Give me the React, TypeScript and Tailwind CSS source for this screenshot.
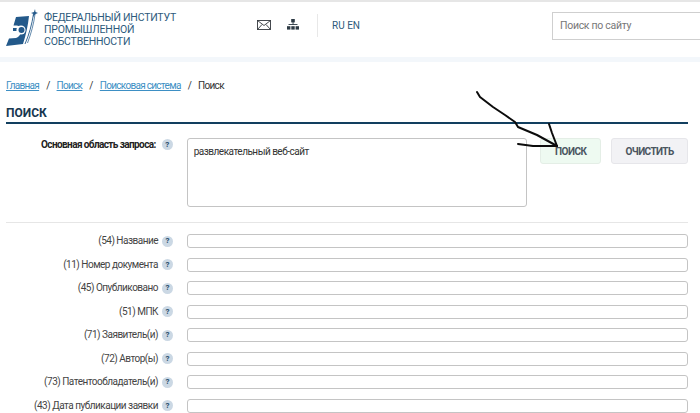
import React from "react";

const fontStack = 'Roboto, "Open Sans", sans-serif';

const rows = [
  "(54) Название",
  "(11) Номер документа",
  "(45) Опубликовано",
  "(51) МПК",
  "(71) Заявитель(и)",
  "(72) Автор(ы)",
  "(73) Патентообладатель(и)",
  "(43) Дата публикации заявки",
];

function Help() {
  return (
    <span className="flex h-[11px] w-[11px] shrink-0 items-center justify-center rounded-full bg-[#cbd8e4] text-[8px] font-bold leading-none text-[#1f4a69]">
      ?
    </span>
  );
}

function Logo() {
  return (
    <svg width="34" height="40" viewBox="0 0 34 40" className="shrink-0">
      <path d="M11 8 L24 7 C23 16 21 26 18 35 L1 37 L4 29.5 L11 29 C14 28 16 25 16.5 21 C16 17 13 16 8.5 16.5 Z" fill="#23598a" />
      <path d="M8 20.5 L12 20.5" stroke="#23598a" strokeWidth="3" />
      <circle cx="16" cy="21" r="4.6" fill="#fff" />
      <circle cx="16.5" cy="21" r="3" fill="#23598a" />
      <path d="M20 35 C24 26 27 15 28.5 5" stroke="#23598a" strokeWidth="0.9" fill="none" />
      <path d="M22.5 34 C26 25 29 14 30 5" stroke="#23598a" strokeWidth="0.7" fill="none" />
      <path d="M30 0 L30.5 3 L33 4 L30.5 5 L28 8 L28.5 5 L26 4 L29 3 Z" fill="#23598a" />
    </svg>
  );
}

function MailIcon() {
  return (
    <svg width="14" height="10" viewBox="0 0 14 10" fill="none" stroke="#33383d" strokeWidth="0.9">
      <rect x="0.5" y="0.5" width="13" height="9" />
      <path d="M0.5 0.5 L7 5.5 L13.5 0.5 M0.5 9.5 L5 4.5 M13.5 9.5 L9 4.5" />
    </svg>
  );
}

function SitemapIcon() {
  return (
    <svg width="12" height="11" viewBox="0 0 12 11" fill="#2d3a44">
      <rect x="4.2" y="0" width="3.6" height="3.4" />
      <rect x="5.6" y="3" width="0.9" height="3" />
      <rect x="1.5" y="5" width="9" height="0.9" />
      <rect x="0" y="7.2" width="3.4" height="3.4" />
      <rect x="4.3" y="7.2" width="3.4" height="3.4" />
      <rect x="8.6" y="7.2" width="3.4" height="3.4" />
    </svg>
  );
}

export default function App() {
  return (
    <div className="relative h-[413px] w-[700px] overflow-hidden bg-white" style={{ fontFamily: fontStack }}>
      <div className="h-[2px] bg-[#e6e6e6]" />
      <header className="flex h-[55px] items-start">
        <div className="ml-[5px] mt-[7px] w-[34px]">
          <Logo />
        </div>
        <div className="ml-[5px] mt-[10px] w-[170px] text-[10.5px] leading-[12px] tracking-[-0.2px] text-[#2d5a7c]">
          ФЕДЕРАЛЬНЫЙ ИНСТИТУТ
          <br />
          ПРОМЫШЛЕННОЙ
          <br />
          СОБСТВЕННОСТИ
        </div>
        <div className="ml-[43px] mt-[18px]">
          <MailIcon />
        </div>
        <div className="ml-[16px] mt-[17px]">
          <SitemapIcon />
        </div>
        <div className="ml-[18px] mt-[12px] h-[23px] w-px bg-[#e8e8e8]" />
        <div className="ml-[14px] mt-[17px] text-[10px] leading-[13px] text-[#2d5a7c]">RU EN</div>
        <div className="ml-auto mt-[10px] flex h-[28px] w-[148px] items-center border border-r-0 border-[#cfcfcf] pl-[7px] text-[10.5px] tracking-[-0.3px] text-[#777]">
          Поиск по сайту
        </div>
      </header>
      <div className="h-[5px] bg-[#f3f7fb]" />

      <nav className="ml-[6px] mt-[17px] flex h-[14px] items-center gap-[7px] text-[10px] leading-[14px] tracking-[-0.7px] text-[#333]">
        <span className="text-[#3d8fc4] underline">Главная</span>
        <span>/</span>
        <span className="text-[#3d8fc4] underline">Поиск</span>
        <span>/</span>
        <span className="text-[#3d8fc4] underline">Поисковая система</span>
        <span>/</span>
        <span>Поиск</span>
      </nav>

      <h1 className="mx-[6px] mt-[12px] h-[17px] text-[12px] font-bold leading-[17px] text-[#17374f]">ПОИСК</h1>
      <div className="ml-[6px] mr-[12px] h-[2px] bg-[#123f5f]" />

      <section className="ml-[6px] mr-[12px] mt-[14px] flex">
        <div className="flex w-[167px] items-start justify-end gap-[6px] pt-[1px]">
          <span className="text-[10px] font-bold leading-[12px] tracking-[-0.6px] text-[#222]">Основная область запроса:</span>
          <Help />
        </div>
        <div className="ml-[14px] h-[69px] w-[341px] rounded-[3px] border border-[#c4c4c4] px-[6px] pt-[6px] text-[10px] leading-[14px] tracking-[-0.5px] text-[#333]">
          развлекательный веб-сайт
        </div>
        <button type="button" className="ml-[13px] h-[26px] w-[61px] rounded-[3px] border border-[#e4eee6] bg-[#eefaf1] text-[10px] font-bold tracking-[-0.5px] text-[#4a5560]">
          ПОИСК
        </button>
        <button type="button" className="ml-[10px] h-[26px] w-[77px] rounded-[3px] border border-[#e6e6ea] bg-[#f2f2f5] text-[10px] font-bold tracking-[-0.6px] text-[#4a5560]">
          ОЧИСТИТЬ
        </button>
      </section>

      <div className="ml-[6px] mr-[12px] mt-[15px] h-px bg-[#e6e6e6]" />

      <div className="ml-[6px] mr-[12px] mt-[11px] flex flex-col gap-[9.5px]">
        {rows.map((label) => (
          <div key={label} className="flex h-[14px] items-center">
            <div className="flex w-[167px] items-center justify-end gap-[4px]">
              <span className="whitespace-nowrap text-[10px] leading-[12px] tracking-[-0.5px] text-[#444]">{label}</span>
              <Help />
            </div>
            <div className="ml-[14px] h-[14px] flex-1 rounded-[3px] border border-[#c4c4c4] bg-white" />
          </div>
        ))}
      </div>

      <svg className="pointer-events-none absolute left-0 top-0" width="700" height="413" fill="none" stroke="#0c0c0c" strokeWidth="2" strokeLinecap="round" strokeLinejoin="round">
        <path d="M477 92 L480 97 L493 107 L505 115 L515 122 L518 127 L537 135 L557 146" />
        <path d="M549 124 L552 133 L557 146 L533 146 L518 144" />
      </svg>
    </div>
  );
}
